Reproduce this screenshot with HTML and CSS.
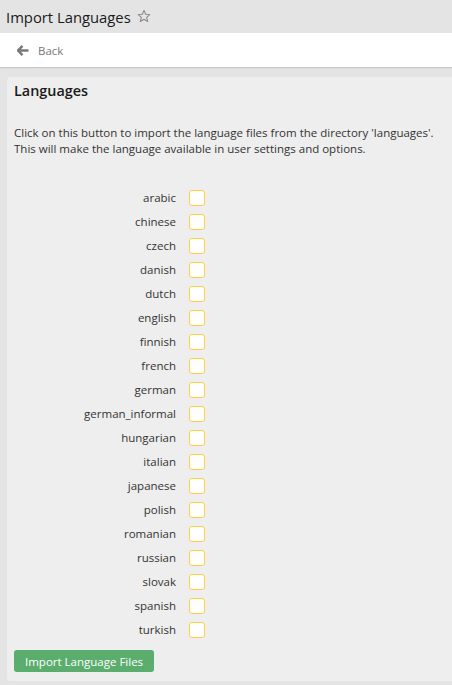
FILE: index.html
```html
<!DOCTYPE html>
<html lang="en">
<head>
    <meta charset="UTF-8">
    <meta name="viewport" content="width=device-width, initial-scale=1.0">
    <title>Import Languages</title>
    <link rel="stylesheet" href="styles.css">
</head>
<body>
    <div class="title-bar">
        <h1>Import Languages</h1>
        <svg class="star" width="14" height="14" viewBox="0 0 24 24"><path d="M12 2.5l2.9 6.6 7.1.6-5.4 4.7 1.6 7-6.2-3.7-6.2 3.7 1.6-7L2 9.7l7.1-.6z" fill="none" stroke="#8a8a8a" stroke-width="1.8" stroke-linejoin="round"/></svg>
    </div>
    <div class="back-bar">
        <a href="#" class="back">
            <svg width="12" height="11" viewBox="0 0 12 11"><path d="M5.5 0.8L1 5.5l4.5 4.7M1.5 5.5H11.5" fill="none" stroke="#7a7a7a" stroke-width="2.4"/></svg>
            Back
        </a>
    </div>
    <div class="panel">
        <h2>Languages</h2>
        <p>Click on this button to import the language files from the directory 'languages'.<br>This will make the language available in user settings and options.</p>
        <div class="lang-list">
            <label>arabic</label><span class="box"></span>
            <label>chinese</label><span class="box"></span>
            <label>czech</label><span class="box"></span>
            <label>danish</label><span class="box"></span>
            <label>dutch</label><span class="box"></span>
            <label>english</label><span class="box"></span>
            <label>finnish</label><span class="box"></span>
            <label>french</label><span class="box"></span>
            <label>german</label><span class="box"></span>
            <label>german_informal</label><span class="box"></span>
            <label>hungarian</label><span class="box"></span>
            <label>italian</label><span class="box"></span>
            <label>japanese</label><span class="box"></span>
            <label>polish</label><span class="box"></span>
            <label>romanian</label><span class="box"></span>
            <label>russian</label><span class="box"></span>
            <label>slovak</label><span class="box"></span>
            <label>spanish</label><span class="box"></span>
            <label>turkish</label><span class="box"></span>
        </div>
        <button>Import Language Files</button>
    </div>
</body>
</html>
```

FILE: styles.css
```css
body {
    margin: 0;
    padding: 0;
    background-color: #e4e4e4;
    font-family: "Open Sans", sans-serif;
    color: #333;
    overflow: hidden;
}

.title-bar {
    height: 33px;
    display: flex;
    align-items: center;
    padding-left: 6px;
}

.title-bar h1 {
    margin: 0;
    font-size: 14.8px;
    font-weight: 400;
    color: #1a1a1a;
}

.star {
    margin-left: 6px;
    margin-top: -2px;
}

.back-bar {
    background-color: #fff;
    height: 34px;
    display: flex;
    align-items: center;
    padding-left: 17px;
    box-shadow: 0 1px 1px rgba(0, 0, 0, 0.12);
}

.back {
    display: flex;
    align-items: center;
    gap: 9px;
    color: #777;
    font-size: 11.5px;
    text-decoration: none;
}

.panel {
    margin: 10px 0 0 7px;
    background-color: #eeeeee;
    border-radius: 4px 0 0 4px;
    padding: 4px 7px 8px 7px;
    height: 592px;
}

.panel h2 {
    margin: 0;
    font-size: 14.4px;
    font-weight: 600;
    color: #1a1a1a;
    line-height: 20px;
}

.panel p {
    margin: 24px 0 33px 0;
    font-size: 11.5px;
    line-height: 16px;
    color: #333;
}

.lang-list {
    display: grid;
    grid-template-columns: 162px 16px;
    column-gap: 13px;
    row-gap: 8px;
    align-items: center;
}

.lang-list label {
    text-align: right;
    font-size: 11.5px;
    color: #333;
    line-height: 16px;
}

.box {
    width: 14px;
    height: 14px;
    border: 1px solid #ffcf40;
    border-radius: 3px;
    background-color: #fff;
}

button {
    margin-top: 12px;
    background-color: #5aad6d;
    color: #fff;
    font-family: "Open Sans", sans-serif;
    font-size: 11.5px;
    border: none;
    border-radius: 3px;
    height: 22px;
    padding: 0 11px;
    cursor: pointer;
}
```
